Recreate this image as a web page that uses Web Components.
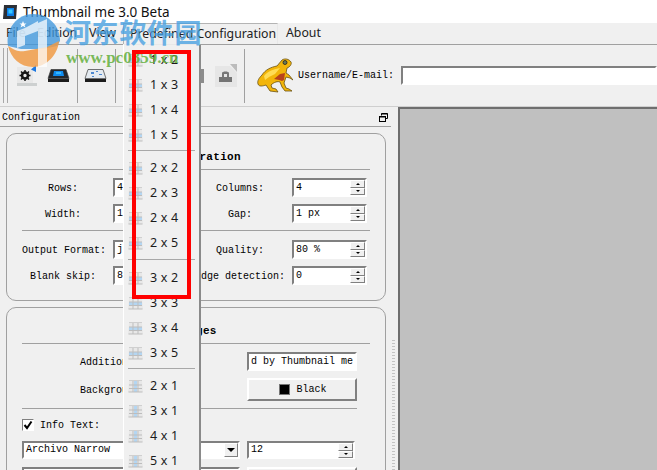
<!DOCTYPE html>
<html>
<head>
<meta charset="utf-8">
<title>Thumbnail me 3.0 Beta</title>
<style>
  html, body { margin: 0; padding: 0; background: #f0f0f0; overflow: hidden; }
</style>
</head>
<body>
<tm-app>
  <tm-titlebar>Thumbnail me 3.0 Beta</tm-titlebar>
  <tm-menubar></tm-menubar>
  <tm-toolbar></tm-toolbar>
  <tm-main>
    <tm-dock>
      <tm-group title="Configuration" style="height:168px">
        <tm-row top="8">
          <tm-field label="Rows:" value="4"></tm-field>
          <tm-field label="Columns:" value="4"></tm-field>
        </tm-row>
        <tm-row top="7">
          <tm-field label="Width:" value="1"></tm-field>
          <tm-field label="Gap:" value="1 px"></tm-field>
        </tm-row>
        <tm-line></tm-line>
        <tm-row top="9">
          <tm-field label="Output Format:" value="j"></tm-field>
          <tm-field label="Quality:" value="80 %"></tm-field>
        </tm-row>
        <tm-row top="7">
          <tm-field label="Blank skip:" value="8"></tm-field>
          <tm-field label="Edge detection:" value="0"></tm-field>
        </tm-row>
      </tm-group>
      <tm-group title="Images" style="height:175px;margin-top:6px">
        <tm-images></tm-images>
      </tm-group>
    </tm-dock>
    <tm-viewer></tm-viewer>
  </tm-main>
  <tm-popup></tm-popup>
  <tm-watermark></tm-watermark>
  <tm-frame></tm-frame>
</tm-app>

<script>
const mono = '"Liberation Mono", monospace';

class TmApp extends HTMLElement {
    constructor() {
        super();
        this.attachShadow({ mode: 'open' }).innerHTML = /*html*/`
        <style>
            :host { display: flex; flex-direction: column; position: relative; width: 657px; height: 470px; overflow: hidden; background: #f0f0f0; color: #000; }
        </style>
        <slot></slot>`;
    }
}

class TmTitlebar extends HTMLElement {
    constructor() {
        super();
        this.attachShadow({ mode: 'open' }).innerHTML = /*html*/`
        <style>
            :host { display: flex; align-items: center; gap: 5px; height: 23px; flex: none; padding-left: 2px; background: #fff; font: 13.5px "Noto Sans", sans-serif; color: #111; }
            svg { flex: none; }
        </style>
        <svg width="16" height="16" viewBox="0 0 16 16">
            <path d="M2 1h13l-1 14H1z" fill="#2b2f36"/>
            <rect x="5" y="4" width="7" height="8" fill="#0d7fe8"/>
            <rect x="6.5" y="5.5" width="4" height="4" fill="#35c8ff"/>
        </svg>
        <slot></slot>`;
    }
}

class TmMenubar extends HTMLElement {
    constructor() {
        super();
        this.attachShadow({ mode: 'open' }).innerHTML = /*html*/`
        <style>
            :host { display: flex; flex: none; box-sizing: border-box; height: 22px; padding-left: 6px; background: #f0f0f0; border-bottom: 1px solid #a0a0a0; font: 12.3px "Noto Sans", sans-serif; color: #222; }
            span { line-height: 20px; flex: none; white-space: nowrap; }
            .active { box-sizing: border-box; width: 155px; padding-left: 6px; border-top: 1px solid #b4b4b4; border-left: 1px solid #b4b4b4; border-right: 1px solid #e8e8e8; }
            .about { margin-left: 8px; }
        </style>
        <span style="width:31px">File</span>
        <span style="width:52px">Edition</span>
        <span style="width:34px">View</span>
        <span class="active">Predefined Configuration</span>
        <span class="about">About</span>`;
    }
}

class TmToolbar extends HTMLElement {
    constructor() {
        super();
        this.attachShadow({ mode: 'open' }).innerHTML = /*html*/`
        <style>
            :host { display: flex; align-items: center; flex: none; box-sizing: border-box; height: 62px; padding-left: 3px; background: #f0f0f0; border-bottom: 1px solid #cfcfcf; font: 10px ${mono}; }
            .grip { box-sizing: border-box; width: 5px; height: 55px; flex: none; border-left: 1px solid #a8a8a8; border-right: 1px solid #a8a8a8; }
            .sep { width: 1px; height: 54px; background: #a0a0a0; flex: none; }
            .cell { display: flex; align-items: center; flex: none; box-sizing: border-box; height: 54px; }
            .cell svg { flex: none; }
            .user { margin: 0 7px 0 5px; white-space: nowrap; }
            .input { flex: 1; box-sizing: border-box; height: 19px; background: #fff; border: 2px solid; border-color: #808080 #fff #fff #808080; }
        </style>
        <div class="grip"></div>
        <div class="cell" style="width:69px;padding-left:9px;gap:10px">
            <svg width="20" height="21" viewBox="0 0 20 21">
                <path d="M0 2h16v17H0z" fill="#e8e8e8"/><path d="M0 18h20v3H0z" fill="#cdd0d0"/>
                <path d="M19 0v7l-5-2.500z" fill="#1e78e0"/>
                <circle cx="8" cy="10.500" r="3" fill="none" stroke="#151515" stroke-width="2.600"/>
                <path d="M8 5v2M8 14v2M2.500 10.500h2M11.500 10.500h2M4 6.500l1.500 1.500M12 6.500l-1.500 1.500M4 14.500l1.500-1.500M12 14.500l-1.500-1.500" stroke="#151515" stroke-width="1.500"/>
            </svg>
            <tm-scan></tm-scan>
        </div>
        <div class="sep"></div>
        <div class="cell" style="width:37px;padding-left:6px"><tm-scan pale></tm-scan></div>
        <div class="sep"></div>
        <div class="cell" style="width:128px;padding-left:5px;gap:11px">
            <svg width="22" height="22" viewBox="0 0 22 22" style="margin-right:28px">
                <path d="M2 4h18v14H2z" fill="#e4e4e4"/>
            </svg>
            <svg width="22" height="22" viewBox="0 0 22 22">
                <path d="M19 4h3v14h-3z" fill="#8c8c8c"/>
            </svg>
            <svg width="22" height="23" viewBox="0 0 22 23">
                <path d="M0 2h15l7 7v14H0z" fill="#e6e6e6"/><path d="M15 0h7v8z" fill="#bcbcbc"/>
                <path d="M4 18v-5h13v5z" fill="#747474"/><path d="M7 13V9c0-2 7-2 7 0v4h-2V10H9v3z" fill="#777"/>
            </svg>
        </div>
        <div class="sep"></div>
        <div class="cell" style="width:48px;padding-left:11px">
            <svg width="37" height="35" viewBox="0 0 37 35">
                <path d="M35 4C33 1 29 0 26 2L21 8C15 9 9 12 6 17 3 20 1 23 2 26 3 29 7 28 10 27L12 30 14 33 22 34 20 31 16 30 15 27C18 24 22 23 24 24L26 29 29 33 36 33 33 31 30 30 28 25 30 19 34 20 37 22 33 17 30 15 31 10C34 9 36 6 35 4z" fill="#f2b50a" stroke="#6a5212" stroke-width=".8"/>
                <path d="M18 21l6-5 5-1-1 7-2 1-3-1z" fill="#b8431b"/>
                <path d="M8 18c4-5 10-7 16-8l-5 6-6 3-4 3z" fill="#ffdc55"/>
                <circle cx="29" cy="4.500" r="2" fill="#6a7a55" stroke="#222" stroke-width=".8"/>
            </svg>
        </div>
        <span class="user">Username/E-mail:</span>
        <div class="input"></div>`;
    }
}

class TmScan extends HTMLElement {
    constructor() {
        super();
        const pale = this.hasAttribute('pale');
        this.attachShadow({ mode: 'open' }).innerHTML = /*html*/`
        <style>
            :host { display: block; width: 23px; height: 13px; flex: none; }
            svg { display: block; }
        </style>
        <svg width="23" height="13" viewBox="0 0 23 13">
            <path d="M4 .5h15l3 9H1z" fill="${pale ? '#e4eaf0' : '#23282e'}" stroke="#3a3a3a" stroke-width=".7"/>
            ${pale
                ? '<path d="M7 3h3v2H7zM12 2h2v1h-2zM15 5h3v1h-3zM8 7h2v1H8z" fill="#4d88d0"/>'
                : '<path d="M7 2h9l1 5H6z" fill="#0f8cf0"/><path d="M9 3h5v2H9z" fill="#36b7ff"/>'}
            <rect x="1" y="10" width="21" height="3" fill="#1c1c1c"/>
        </svg>`;
    }
}

class TmMain extends HTMLElement {
    constructor() {
        super();
        this.attachShadow({ mode: 'open' }).innerHTML = /*html*/`
        <style>
            :host { display: flex; flex: 1; min-height: 0; }
        </style>
        <slot></slot>`;
    }
}

class TmDock extends HTMLElement {
    constructor() {
        super();
        this.attachShadow({ mode: 'open' }).innerHTML = /*html*/`
        <style>
            :host { display: block; position: relative; flex: none; box-sizing: border-box; width: 398px; font: 10px ${mono}; }
            header { display: flex; justify-content: space-between; align-items: center; box-sizing: border-box; width: 391px; height: 20px; padding: 2px 3px 0 2px; border-bottom: 1px solid #a0a0a0; }
            .body { padding: 6px 0 0 6px; }
            .dots { position: absolute; left: 392px; top: 233px; width: 3px; height: 130px; background: repeating-linear-gradient(#c4c4c4 0 1px, transparent 1px 3px); }
        </style>
        <header>
            <span>Configuration</span>
            <svg width="9" height="9" viewBox="0 0 9 9">
                <path d="M2.500 2.500V.5h6v5h-2" fill="none" stroke="#000"/><path d="M2.500 1h6" stroke="#000"/>
                <rect x=".5" y="3.500" width="6" height="5" fill="#f0f0f0" stroke="#000"/><path d="M.5 4h6" stroke="#000"/>
            </svg>
        </header>
        <div class="body"><slot></slot></div>
        <div class="dots"></div>`;
    }
}

class TmGroup extends HTMLElement {
    constructor() {
        super();
        this.attachShadow({ mode: 'open' }).innerHTML = /*html*/`
        <style>
            :host { display: block; box-sizing: border-box; width: 380px; border: 1px solid #a0a0a0; border-radius: 10px; padding: 0 15px; }
            .title { height: 36px; box-sizing: border-box; padding-top: 17px; line-height: 12px; text-align: center; font-weight: bold; font-size: 11px; letter-spacing: .3px; border-bottom: 1px solid #a0a0a0; }
        </style>
        <div class="title">${this.getAttribute('title')}</div>
        <slot></slot>`;
        this.removeAttribute('title');
    }
}

class TmRow extends HTMLElement {
    constructor() {
        super();
        this.attachShadow({ mode: 'open' }).innerHTML = /*html*/`
        <style>
            :host { display: flex; gap: 7px; padding-top: ${this.getAttribute('top')}px; }
        </style>
        <slot></slot>`;
    }
}

class TmLine extends HTMLElement {
    constructor() {
        super();
        this.attachShadow({ mode: 'open' }).innerHTML = /*html*/`
        <style>
            :host { display: block; height: 1px; margin-top: 7px; background: #a0a0a0; }
        </style>`;
    }
}

class TmField extends HTMLElement {
    constructor() {
        super();
        this.attachShadow({ mode: 'open' }).innerHTML = /*html*/`
        <style>
            :host { display: flex; align-items: center; }
            label { width: 82px; margin-right: 9px; padding-top: 1px; flex: none; text-align: center; white-space: nowrap; }
            :host(:last-child) label { width: 90px; margin-right: 7px; }
        </style>
        <label>${this.getAttribute('label')}</label>
        <tm-spin value="${this.getAttribute('value')}"></tm-spin>`;
    }
}

class TmSpin extends HTMLElement {
    constructor() {
        super();
        this.attachShadow({ mode: 'open' }).innerHTML = /*html*/`
        <style>
            :host { display: flex; justify-content: space-between; box-sizing: border-box; width: 75px; height: 19px; background: #fff; border: 2px solid; border-color: #808080 #fff #fff #808080; font-size: 10px; line-height: 16px; padding-left: 2px; }
            .btns { display: flex; flex-direction: column; width: 15px; height: 15px; flex: none; }
            .btns i { display: flex; box-sizing: border-box; flex: 1; align-items: center; justify-content: center; background: #f0f0f0; border: 1px solid; border-color: #fff #808080 #808080 #fff; }
            .btns i::after { content: ""; border-left: 2px solid transparent; border-right: 2px solid transparent; }
            .up::after { border-bottom: 2px solid #000; }
            .down::after { border-top: 2px solid #000; }
        </style>
        <span>${this.getAttribute('value')}</span>
        <div class="btns"><i class="up"></i><i class="down"></i></div>`;
    }
}

class TmImages extends HTMLElement {
    constructor() {
        super();
        this.attachShadow({ mode: 'open' }).innerHTML = /*html*/`
        <style>
            :host { display: block; width: 335px; font-size: 10px; }
            .row { display: flex; align-items: center; justify-content: space-between; }
            .lab { padding: 1px 0 0 58px; white-space: nowrap; }
            .text { box-sizing: border-box; width: 110px; height: 19px; background: #fff; border: 2px solid; border-color: #808080 #fff #fff #808080; white-space: nowrap; line-height: 16px; padding-left: 2px; }
            .btn { display: flex; align-items: center; justify-content: center; gap: 6px; box-sizing: border-box; width: 110px; height: 23px; padding-left: 2px; border: 2px solid; border-color: #fff #808080 #808080 #fff; }
            .swatch { box-sizing: border-box; width: 11px; height: 11px; background: #000; border: 1px solid #777; }
            hr { border: 0; height: 1px; background: #a0a0a0; margin: 7px 0 10px; }
            .check { display: flex; align-items: center; gap: 6px; }
            .box { box-sizing: border-box; width: 12px; height: 12px; background: #fff; border: 1px solid #808080; border-right-color: #fff; border-bottom-color: #fff; }
            .box svg { display: block; }
            .combo { display: flex; justify-content: space-between; box-sizing: border-box; width: 218px; height: 18px; background: #fff; border: 2px solid; border-color: #808080 #fff #fff #808080; line-height: 14px; padding-left: 2px; }
            .arrow { display: flex; align-items: center; justify-content: center; width: 14px; height: 14px; background: #f0f0f0; border: 1px solid; border-color: #fff #808080 #808080 #fff; box-sizing: border-box; }
            .arrow::after { content: ""; border-left: 4px solid transparent; border-right: 4px solid transparent; border-top: 4px solid #000; }
            tm-spin { width: 108px; height: 18px; margin-right: 2px; line-height: 14px; }
            .tail { display: flex; justify-content: space-between; margin-top: 8px; }
            .wide { box-sizing: border-box; width: 110px; height: 20px; border: 2px solid; border-color: #fff #808080 #808080 #fff; }
        </style>
        <div class="row" style="margin-top:8px"><span class="lab">Additional text:</span><div class="text">d by Thumbnail me</div></div>
        <div class="row" style="margin-top:7px"><span class="lab">Background color:</span><div class="btn"><span class="swatch"></span>Black</div></div>
        <hr>
        <div class="check">
            <span class="box"><svg width="10" height="10" viewBox="0 0 10 10"><path d="M1.500 5l2.500 3 4.500-6.500" fill="none" stroke="#000" stroke-width="2"/></svg></span>
            Info Text:
        </div>
        <div class="row" style="margin-top:10px"><div class="combo"><span>Archivo Narrow</span><span class="arrow"></span></div><tm-spin value="12"></tm-spin></div>
        <div class="tail"><div class="combo"></div><div class="wide"></div></div>`;
    }
}

class TmViewer extends HTMLElement {
    constructor() {
        super();
        this.attachShadow({ mode: 'open' }).innerHTML = /*html*/`
        <style>
            :host { display: block; flex: 1; background: #c0c0c0; border-top: 2px solid #6e6e6e; border-left: 2px solid #6e6e6e; }
        </style>`;
    }
}

class TmPopup extends HTMLElement {
    constructor() {
        super();
        const groups = [
            [[1, 2, 'h'], [1, 3, 'h'], [1, 4, 'h'], [1, 5, 'h']],
            [[2, 2, 'h'], [2, 3, 'h'], [2, 4, 'h'], [2, 5, 'h']],
            [[3, 2, 'h'], [3, 3, 'h'], [3, 4, 'h'], [3, 5, 'h']],
            [[2, 1, 'v'], [3, 1, 'v'], [4, 1, 'v'], [5, 1, 'v']]
        ];
        const seps = ['', '<div class="sep"></div>', '<div class="sep mid"></div>', '<div class="sep"></div>'];
        const items = groups.map((group, i) => seps[i] + group.map(([a, b, dir]) => /*html*/`
            <div class="item"><tm-grid-icon dir="${dir}"></tm-grid-icon><span>${a} x ${b}</span></div>`).join('')
        ).join('');
        this.attachShadow({ mode: 'open' }).innerHTML = /*html*/`
        <style>
            :host { display: block; position: absolute; left: 123px; top: 44px; box-sizing: border-box; width: 78px; height: 440px; padding: 2px 0 0 4px; background: #f0f0f0; border-left: 1px solid #fff; border-top: 1px solid #e8e8e8; border-right: 2px solid #8a8a8a; font: 12.5px "Noto Sans", sans-serif; color: #1b1b1b; }
            .item { display: flex; align-items: center; gap: 7px; height: 25px; white-space: nowrap; letter-spacing: .2px; }
            .sep { height: 1px; margin: 3px 4px 4px 0; background: #a8a8a8; }
            .mid { margin: 4px 4px 5px 0; }
        </style>
        ${items}`;
    }
}

class TmGridIcon extends HTMLElement {
    constructor() {
        super();
        const horizontal = this.getAttribute('dir') === 'h';
        this.attachShadow({ mode: 'open' }).innerHTML = /*html*/`
        <style>
            :host { display: block; width: 15px; height: 14px; flex: none; }
            svg { display: block; }
        </style>
        <svg width="15" height="14" viewBox="0 0 15 14">
            <path d="M1 2h13l1 11H0z" fill="#e8e8e8"/>
            ${horizontal ? '<rect x="1" y="6" width="13" height="3" fill="#b4d6f2"/>' : '<rect x="6" y="2" width="3" height="11" fill="#b4d6f2"/>'}
            <path d="M5 2v11M10 2v11M1 6h13M1 9.500h13M.5 13h14" stroke="#bdbdbd" stroke-width="1" fill="none"/>
            <path d="M1 1.500h13" stroke="#cfcfcf"/>
        </svg>`;
    }
}

class TmWatermark extends HTMLElement {
    constructor() {
        super();
        this.attachShadow({ mode: 'open' }).innerHTML = /*html*/`
        <style>
            :host { display: block; position: absolute; left: 5px; top: 13px; width: 200px; height: 56px; pointer-events: none; }
            svg { position: absolute; left: 0; top: 0; }
            .cn { position: absolute; left: 59px; top: 0; font: bold 27px/38px "Noto Sans CJK SC", sans-serif; color: rgba(70, 160, 225, .8); letter-spacing: .6px; white-space: nowrap; }
            .url { position: absolute; left: 61px; top: 35px; font: bold 17px/20px "Liberation Serif", serif; color: rgba(100, 175, 60, .85); white-space: nowrap; }
        </style>
        <svg width="56" height="54" viewBox="0 0 56 54">
            <path d="M3 33C0 16 12 1 28 1s27 12 27 27l-3 5-14 3H16z" fill="rgba(62,150,220,.78)"/>
            <path d="M3 33c8 5 12 6 17 5l22-4 12-6c-1 13-12 26-26 26C15 54 6 45 3 33z" fill="rgba(240,155,70,.85)"/>
            <path d="M12 18l8-3v17l-8 3z" fill="rgba(255,255,255,.72)"/>
            <path d="M20 15l13-7v10l-13 5z" fill="rgba(255,255,255,.72)"/>
            <path d="M33 10l9-4v48h-9z" fill="rgba(255,255,255,.72)"/>
            <path d="M18 8l1 2.500 2.500 0-2 1.500 1 2.500-2.500-1.500-2.500 1.500 1-2.500-2-1.500 2.500 0z" fill="#fff"/>
        </svg>
        <span class="cn">河东软件园</span>
        <span class="url">www.pc0359.cn</span>`;
    }
}

class TmFrame extends HTMLElement {
    constructor() {
        super();
        this.attachShadow({ mode: 'open' }).innerHTML = /*html*/`
        <style>
            :host { display: block; position: absolute; left: 132px; top: 50px; box-sizing: border-box; width: 59px; height: 249px; border: 4px solid #f00; pointer-events: none; }
        </style>`;
    }
}

customElements.define('tm-app', TmApp);
customElements.define('tm-titlebar', TmTitlebar);
customElements.define('tm-menubar', TmMenubar);
customElements.define('tm-scan', TmScan);
customElements.define('tm-toolbar', TmToolbar);
customElements.define('tm-main', TmMain);
customElements.define('tm-dock', TmDock);
customElements.define('tm-group', TmGroup);
customElements.define('tm-row', TmRow);
customElements.define('tm-line', TmLine);
customElements.define('tm-spin', TmSpin);
customElements.define('tm-field', TmField);
customElements.define('tm-images', TmImages);
customElements.define('tm-viewer', TmViewer);
customElements.define('tm-grid-icon', TmGridIcon);
customElements.define('tm-popup', TmPopup);
customElements.define('tm-watermark', TmWatermark);
customElements.define('tm-frame', TmFrame);
</script>
</body>
</html>
